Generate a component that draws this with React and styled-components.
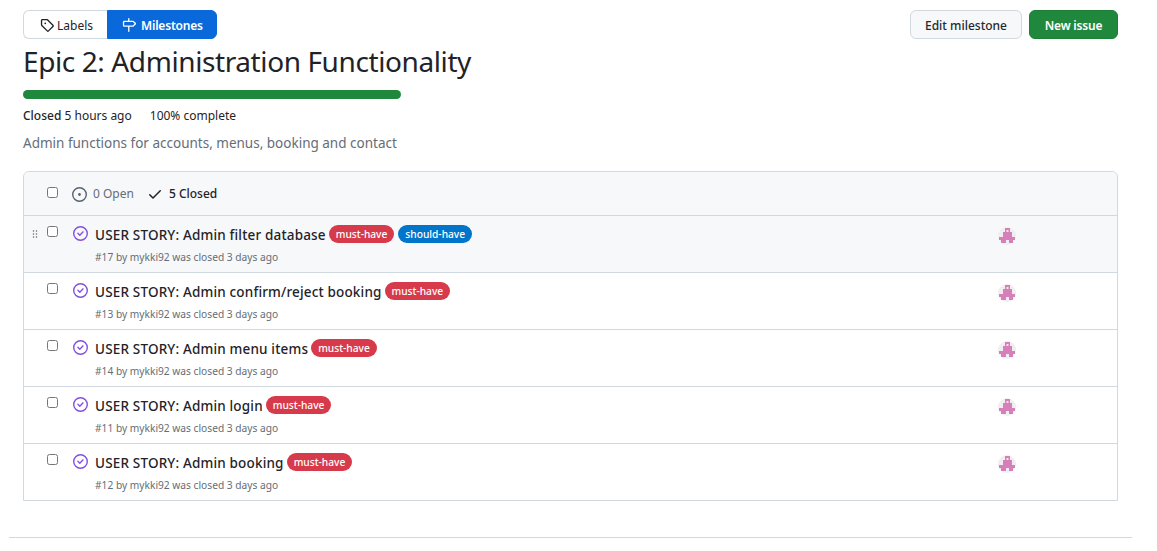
import React from "react";
import styled, { createGlobalStyle } from "styled-components";

const GlobalStyle = createGlobalStyle`
  html, body {
    margin: 0;
    padding: 0;
    background: #fff;
    font-family: "Noto Sans", "Open Sans", sans-serif;
    color: #1f2328;
  }
`;

const issues = [
  { id: 17, title: "USER STORY: Admin filter database", labels: ["must", "should"], hover: true },
  { id: 13, title: "USER STORY: Admin confirm/reject booking", labels: ["must"] },
  { id: 14, title: "USER STORY: Admin menu items", labels: ["must"] },
  { id: 11, title: "USER STORY: Admin login", labels: ["must"] },
  { id: 12, title: "USER STORY: Admin booking", labels: ["must"] },
];

const labelText = { must: "must-have", should: "should-have" };

function Octicon({ d, size = 16, color = "currentColor" }) {
  return (
    <svg width={size} height={size} viewBox="0 0 16 16" fill={color}>
      <path d={d} />
    </svg>
  );
}

const tagPath =
  "M1 7.775V2.75C1 1.784 1.784 1 2.75 1h5.025c.464 0 .91.184 1.238.513l6.25 6.25a1.75 1.75 0 0 1 0 2.474l-5.026 5.026a1.75 1.75 0 0 1-2.474 0l-6.25-6.25A1.752 1.752 0 0 1 1 7.775Zm1.5 0c0 .066.026.13.073.177l6.25 6.25a.25.25 0 0 0 .354 0l5.025-5.025a.25.25 0 0 0 0-.354l-6.25-6.25a.25.25 0 0 0-.177-.073H2.75a.25.25 0 0 0-.25.25ZM6 5a1 1 0 1 1 0 2 1 1 0 0 1 0-2Z";
const milestonePath =
  "M7.75 0a.75.75 0 0 1 .75.75V3h3.634c.414 0 .814.147 1.13.414l2.07 1.75a1.75 1.75 0 0 1 0 2.672l-2.07 1.75a1.75 1.75 0 0 1-1.13.414H8.5v5.25a.75.75 0 0 1-1.5 0V10H2.75A1.75 1.75 0 0 1 1 8.25v-3.5C1 3.784 1.784 3 2.75 3H7V.75A.75.75 0 0 1 7.75 0Zm4.384 8.5a.25.25 0 0 0 .161-.06l2.07-1.75a.248.248 0 0 0 0-.38l-2.07-1.75a.25.25 0 0 0-.161-.06H2.75a.25.25 0 0 0-.25.25v3.5c0 .138.112.25.25.25h9.384Z";
const openPath =
  "M8 9.5a1.5 1.5 0 1 0 0-3 1.5 1.5 0 0 0 0 3ZM8 0a8 8 0 1 1 0 16A8 8 0 0 1 8 0ZM1.5 8a6.5 6.5 0 1 0 13 0 6.5 6.5 0 0 0-13 0Z";
const checkPath =
  "M13.78 4.22a.75.75 0 0 1 0 1.06l-7.25 7.25a.75.75 0 0 1-1.06 0L2.22 9.28a.751.751 0 0 1 .018-1.042.751.751 0 0 1 1.042-.018L6 10.94l6.72-6.72a.75.75 0 0 1 1.06 0Z";
const closedPath =
  "M11.28 6.78a.75.75 0 0 0-1.06-1.06L7.25 8.69 5.78 7.22a.75.75 0 0 0-1.06 1.06l2 2a.75.75 0 0 0 1.06 0l3.5-3.5ZM16 8A8 8 0 1 1 0 8a8 8 0 0 1 16 0Zm-1.5 0a6.5 6.5 0 1 0-13 0 6.5 6.5 0 0 0 13 0Z";
const grabberPath =
  "M10 13a1 1 0 1 1 0-2 1 1 0 0 1 0 2Zm0-4a1 1 0 1 1 0-2 1 1 0 0 1 0 2Zm-4 4a1 1 0 1 1 0-2 1 1 0 0 1 0 2Zm5-9a1 1 0 1 1-2 0 1 1 0 0 1 2 0ZM7 8a1 1 0 1 1-2 0 1 1 0 0 1 2 0ZM6 5a1 1 0 1 1 0-2 1 1 0 0 1 0 2Z";

function Identicon() {
  return (
    <AvatarWrap>
      <svg width="18" height="18" viewBox="0 0 18 18">
        <circle cx="9" cy="9" r="9" fill="#f0eef0" />
        <path
          d="M7 1h5v4h2v5h3v3h-2v3h-4v-3H8v3H3v-3H1v-3h4V5h2Z"
          fill="#d77fb9"
        />
        <rect x="8.5" y="3" width="2" height="2" fill="#f6e6f0" />
      </svg>
    </AvatarWrap>
  );
}

function App() {
  return (
    <>
      <GlobalStyle />
      <Page>
        <TopBar>
          <SubNav>
            <NavItem>
              <Octicon d={tagPath} size={14} />
              Labels
            </NavItem>
            <NavItem $active>
              <Octicon d={milestonePath} size={14} />
              Milestones
            </NavItem>
          </SubNav>
          <Actions>
            <EditButton>Edit milestone</EditButton>
            <NewButton>New issue</NewButton>
          </Actions>
        </TopBar>

        <Title>Epic 2: Administration Functionality</Title>
        <ProgressTrack>
          <ProgressFill />
        </ProgressTrack>
        <Meta>
          <span>
            <strong>Closed</strong> 5 hours ago
          </span>
          <span>100% complete</span>
        </Meta>
        <Description>Admin functions for accounts, menus, booking and contact</Description>

        <Box>
          <BoxHeader>
            <Checkbox type="checkbox" />
            <StateLink>
              <Octicon d={openPath} size={15} color="#59636e" />
              <span>0 Open</span>
            </StateLink>
            <StateLink $selected>
              <Octicon d={checkPath} size={16} />
              <span>5 Closed</span>
            </StateLink>
          </BoxHeader>
          {issues.map((issue) => (
            <IssueRow key={issue.id} $hover={issue.hover}>
              <Handle>{issue.hover && <Octicon d={grabberPath} size={12} color="#59636e" />}</Handle>
              <RowCheckbox type="checkbox" />
              <StatusIcon>
                <Octicon d={closedPath} size={15} color="#8250df" />
              </StatusIcon>
              <IssueBody>
                <IssueTitle>
                  <span>{issue.title}</span>
                  {issue.labels.map((l) => (
                    <Label key={l} $kind={l}>
                      {labelText[l]}
                    </Label>
                  ))}
                </IssueTitle>
                <IssueMeta>#{issue.id} by mykki92 was closed 3 days ago</IssueMeta>
              </IssueBody>
              <Identicon />
            </IssueRow>
          ))}
        </Box>
        <Footer />
      </Page>
    </>
  );
}

const Page = styled.div`
  width: 1157px;
  height: 551px;
  overflow: hidden;
  padding: 10px 39px 0 23px;
  box-sizing: border-box;
`;

const TopBar = styled.div`
  display: flex;
  justify-content: space-between;
  align-items: center;
  height: 29px;
`;

const SubNav = styled.nav`
  display: flex;
  height: 29px;
`;

const NavItem = styled.a`
  display: flex;
  align-items: center;
  gap: ${(p) => (p.$active ? "5px" : "3px")};
  box-sizing: border-box;
  padding: 1px 0 0 ${(p) => (p.$active ? "14px" : "16px")};
  font-size: 12px;
  letter-spacing: ${(p) => (p.$active ? "-0.2px" : "0")};
  height: 29px;
  width: ${(p) => (p.$active ? "110px" : "84px")};
  font-weight: ${(p) => (p.$active ? 600 : 400)};
  color: ${(p) => (p.$active ? "#fff" : "#1f2328")};
  background: ${(p) => (p.$active ? "#0969da" : "#fff")};
  border: 1px solid ${(p) => (p.$active ? "#0969da" : "#d1d9e0")};
  border-radius: ${(p) => (p.$active ? "0 6px 6px 0" : "6px 0 0 6px")};
  ${(p) => (p.$active ? "" : "border-right: none;")}
`;

const Actions = styled.div`
  display: flex;
  gap: 7px;
`;

const EditButton = styled.button`
  width: 112px;
  height: 29px;
  padding: 2px 0 0;
  box-sizing: border-box;
  background: #f6f8fa;
  border: 1px solid #d1d9e0;
  border-radius: 6px;
  font-family: inherit;
  font-size: 12px;
  font-weight: 500;
  color: #25292e;
`;

const NewButton = styled(EditButton)`
  width: 89px;
  background: #1f883d;
  border-color: #1b7f37;
  color: #fff;
  font-weight: 600;
  letter-spacing: -0.2px;
`;

const Title = styled.h1`
  margin: 3px 0 0;
  font-size: 28px;
  line-height: 39px;
  letter-spacing: -0.4px;
  font-weight: 400;
  color: #1f2328;
`;

const ProgressTrack = styled.div`
  width: 378px;
  height: 9px;
  margin-top: 9px;
  background: #e6e8eb;
  border-radius: 5px;
  overflow: hidden;
`;

const ProgressFill = styled.div`
  width: 100%;
  height: 100%;
  background: #1f883d;
`;

const Meta = styled.div`
  display: flex;
  gap: 18px;
  margin-top: 8px;
  font-size: 12px;
  line-height: 18px;
  color: #1f2328;

  strong {
    font-weight: 500;
  }
`;

const Description = styled.p`
  margin: 9px 0 0;
  font-size: 13.5px;
  line-height: 18px;
  color: #656d76;
`;

const Box = styled.div`
  margin-top: 19px;
  border: 1px solid #d1d9e0;
  border-radius: 6px 6px 0 0;
`;

const BoxHeader = styled.div`
  display: flex;
  align-items: center;
  height: 43px;
  padding-left: 23px;
  background: #f6f8fa;
  border-bottom: 1px solid #d1d9e0;
  border-radius: 6px 6px 0 0;
`;

const Checkbox = styled.input`
  width: 11px;
  height: 11px;
  margin: 0 14px 3px 0;
`;

const StateLink = styled.a`
  display: flex;
  align-items: center;
  gap: 6px;
  margin-right: 13px;
  font-size: 12px;
  font-weight: ${(p) => (p.$selected ? 500 : 400)};
  color: ${(p) => (p.$selected ? "#1f2328" : "#656d76")};

  svg {
    margin-top: ${(p) => (p.$selected ? "0" : "2px")};
  }
`;

const IssueRow = styled.div`
  display: flex;
  align-items: flex-start;
  box-sizing: border-box;
  height: 57px;
  padding-top: 9px;
  background: ${(p) => (p.$hover ? "#f6f8fa" : "#fff")};
  border-bottom: 1px solid #d1d9e0;

  &:last-child {
    border-bottom: none;
    height: 56px;
  }
`;

const Handle = styled.div`
  display: flex;
  width: 23px;
  padding: 3px 0 0 5px;
  box-sizing: border-box;
  height: 15px;
`;

const RowCheckbox = styled(Checkbox)`
  margin: 1px 15px 0 0;
`;

const StatusIcon = styled.div`
  display: flex;
  margin: 1px 7px 0 0;
`;

const IssueBody = styled.div`
  width: 903px;
`;

const IssueTitle = styled.div`
  display: flex;
  align-items: center;
  gap: 3px;
  height: 20px;
  font-size: 13.5px;
  letter-spacing: 0.17px;
  font-weight: 500;
  color: #1f2328;
`;

const Label = styled.span`
  display: inline-block;
  padding: 0 7px;
  height: 18px;
  line-height: 18px;
  border-radius: 9px;
  font-size: 10.2px;
  letter-spacing: 0;
  font-weight: 500;
  color: #fff;
  background: ${(p) => (p.$kind === "must" ? "#d73a4a" : "#0075ca")};
  margin-top: -3px;

  & + & {
    margin-left: 1px;
  }
`;

const IssueMeta = styled.div`
  margin-top: 5px;
  font-size: 10.2px;
  line-height: 15px;
  color: #656d76;
`;

const AvatarWrap = styled.div`
  height: 18px;
  margin-top: 2px;
`;

const Footer = styled.div`
  margin: 36px 0 0 -14px;
  width: 1123px;
  border-top: 1px solid #d1d9e0;
`;

export default App;
